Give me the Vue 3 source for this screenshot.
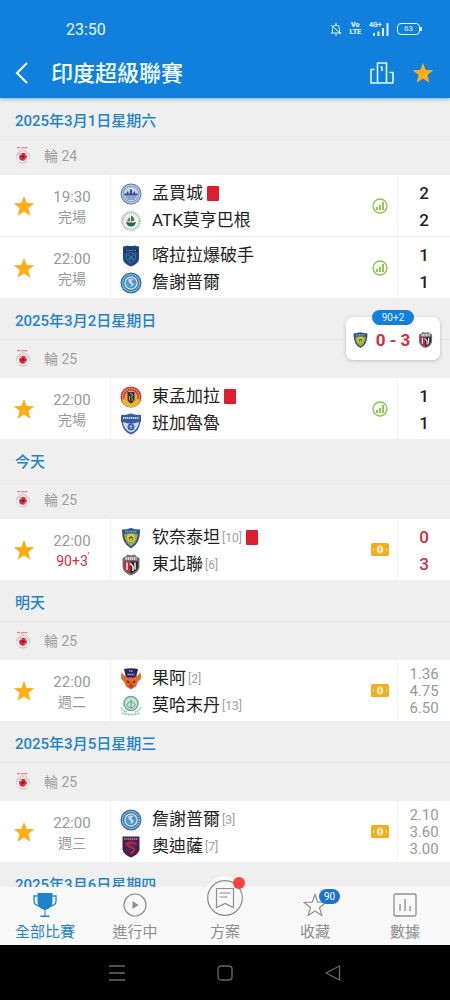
<script setup>
import { ref } from 'vue'

const activeTab = ref('all')

const groups = ref([
  {
    date: '2025年3月1日星期六', round: '輪 24', matches: [
      { id: 1, time: '19:30', status: '完場', info: 'stats', scores: ['2', '2'], fav: true,
        teams: [{ name: '孟買城', crest: 'mumbai', red: true }, { name: 'ATK莫亨巴根', crest: 'mohun' }] },
      { id: 2, time: '22:00', status: '完場', info: 'stats', scores: ['1', '1'], fav: true,
        teams: [{ name: '喀拉拉爆破手', crest: 'kerala' }, { name: '詹謝普爾', crest: 'jamshedpur' }] }
    ]
  },
  {
    date: '2025年3月2日星期日', round: '輪 25', matches: [
      { id: 3, time: '22:00', status: '完場', info: 'stats', scores: ['1', '1'], fav: true,
        teams: [{ name: '東孟加拉', crest: 'eastbengal', red: true }, { name: '班加魯魯', crest: 'bengaluru' }] }
    ]
  },
  {
    date: '今天', round: '輪 25', matches: [
      { id: 4, time: '22:00', status: '90+3', live: true, info: 'odds', scores: ['0', '3'], fav: true,
        teams: [{ name: '钦奈泰坦', crest: 'chennai', rank: 10, red: true }, { name: '東北聯', crest: 'northeast', rank: 6 }] }
    ]
  },
  {
    date: '明天', round: '輪 25', matches: [
      { id: 5, time: '22:00', status: '週二', info: 'odds', odds: ['1.36', '4.75', '6.50'], fav: true,
        teams: [{ name: '果阿', crest: 'goa', rank: 2 }, { name: '莫哈末丹', crest: 'mohammedan', rank: 13 }] }
    ]
  },
  {
    date: '2025年3月5日星期三', round: '輪 25', matches: [
      { id: 6, time: '22:00', status: '週三', info: 'odds', odds: ['2.10', '3.60', '3.00'], fav: true,
        teams: [{ name: '詹謝普爾', crest: 'jamshedpur', rank: 3 }, { name: '奧迪薩', crest: 'odisha', rank: 7 }] }
    ]
  },
  { date: '2025年3月6日星期四', matches: [] }
])

const tabs = [
  { id: 'all', label: '全部比賽' },
  { id: 'live', label: '進行中' },
  { id: 'plans', label: '方案' },
  { id: 'fav', label: '收藏' },
  { id: 'data', label: '數據' }
]
</script>

<template>
  <div class="screen">
    <svg class="defs" aria-hidden="true">
      <symbol id="star" viewBox="0 0 24 24">
        <path d="M12 1l3 7.700 8.200.4-6.400 5.200 2.200 8.200L12 18l-7 4.500 2.200-8.200L.8 9.100 9 8.700z" />
      </symbol>
      <symbol id="league" viewBox="0 0 28 32">
        <path d="M4 4q2-3 4 0M10 3h12" stroke="#dd7382" stroke-width="2" fill="none" />
        <circle cx="14" cy="18" r="12" fill="#f8f6f6" stroke="#d8d4d5" stroke-width="1.500" />
        <path d="M3 17Q14 0 25 17" fill="none" stroke="#b5acae" stroke-width="2" stroke-dasharray="2 1" />
        <circle cx="14" cy="19" r="7" fill="#dc2f3b" />
        <path d="M14 16l3 2-1 3.500h-4L11 18z" fill="#8c1c27" />
        <path d="M8 16l4-2M17 24l3-2M18 14l2 3" stroke="#fff" stroke-width="1.500" />
        <path d="M7 28q7 4 14 0" stroke="#cfc6c8" stroke-width="2" fill="none" />
      </symbol>
      <symbol id="mumbai" viewBox="0 0 44 44">
        <circle cx="22" cy="22" r="21" fill="#5f78ad" />
        <circle cx="22" cy="22" r="17.500" fill="none" stroke="#b9c7df" stroke-width="3" />
        <circle cx="22" cy="22" r="15" fill="#c3d3e8" />
        <path d="M9 21h26v4H9zM14 17h3v4h-3zM20 13h4v8h-4zM27 17h3v4h-3z" fill="#314d86" />
        <path d="M11 28h22M14 32h16" stroke="#5f78ad" stroke-width="2" />
      </symbol>
      <symbol id="mohun" viewBox="0 0 44 44">
        <circle cx="22" cy="22" r="20" fill="#f0f2ed" stroke="#dfe3dc" stroke-width="2" />
        <circle cx="22" cy="22" r="17" fill="none" stroke="#a9b6a9" stroke-width="4" stroke-dasharray="2 2" />
        <path d="M12 24q10 2 20 0-2 9-10 9t-10-9z" fill="#216c46" />
        <path d="M22 23V11q7 4 7 10z" fill="#22805b" />
        <path d="M20 23V14q-6 4-6 9z" fill="#c35245" />
      </symbol>
      <symbol id="kerala" viewBox="0 0 44 44">
        <path d="M6 3q5 0 8-2 8 2 16 0 3 2 8 2v24q0 10-16 16Q6 37 6 27z" fill="#1d467d" />
        <path d="M10 8h24v6H10z" fill="#10294f" />
        <path d="M12 11h20" stroke="#5b97c4" stroke-width="3" stroke-dasharray="2 1" />
        <path d="M13 18q9-5 18 0v9q-3 7-9 9-6-2-9-9z" fill="none" stroke="#3b73ac" stroke-width="2" />
        <path d="M17 20l4 4-3 6M27 20l-4 4 3 6" stroke="#5590c0" stroke-width="2" fill="none" />
      </symbol>
      <symbol id="jamshedpur" viewBox="0 0 44 44">
        <circle cx="22" cy="22" r="21" fill="#2f6fa9" />
        <circle cx="22" cy="22" r="17" fill="none" stroke="#9dbdd6" stroke-width="3" stroke-dasharray="3 1" />
        <circle cx="22" cy="22" r="13.500" fill="#dbe9f3" />
        <circle cx="22" cy="22" r="11" fill="#4b9bd0" />
        <path d="M16 15q8-4 11 1l-5 3q6 1 5 7-3 4-7 3l3-4q-6-2-7-10z" fill="#b5d9ed" />
        <path d="M24 16l6 4-4 2z" fill="#d14a55" />
      </symbol>
      <symbol id="eastbengal" viewBox="0 0 44 44">
        <circle cx="22" cy="22" r="21" fill="#c93832" />
        <circle cx="22" cy="22" r="17" fill="none" stroke="#efa08e" stroke-width="3" stroke-dasharray="3 2" />
        <path d="M3 27q5 15 19 16t19-16l-8-2H11z" fill="#eeb52d" />
        <circle cx="22" cy="22" r="13" fill="#e9a92f" />
        <path d="M15 12h14v16q-2 5-7 7-5-2-7-7z" fill="#273655" />
        <path d="M20 14l5 3-2 6 3 7M19 20v9" stroke="#d39343" stroke-width="2" fill="none" />
      </symbol>
      <symbol id="bengaluru" viewBox="0 0 44 44">
        <path d="M2 4q10 0 20-3 10 3 20 3v13q-2 2-2 5-2 15-18 21Q6 37 4 22q0-3-2-5z" fill="#3c5a9f" />
        <path d="M6 18q16 7 32 0-1 15-16 21Q7 33 6 18z" fill="#dce4f2" />
        <path d="M6 10h32" stroke="#c0cce5" stroke-width="4" stroke-dasharray="3 1" />
        <circle cx="22" cy="28" r="7" fill="#3c62ac" />
        <path d="M19 27h6M22 24v8M11 23l4 7M33 23l-4 7" stroke="#aebfe0" stroke-width="2" />
      </symbol>
      <symbol id="chennai" viewBox="0 0 44 44">
        <path d="M4 5q9 0 18-3 9 3 18 3 1 28-18 38Q3 33 4 5z" fill="#2c5280" />
        <path d="M8 14q14-3 28 0-2 18-14 25Q10 32 8 14z" fill="#9aaa42" />
        <path d="M10 9h24" stroke="#6aa1cc" stroke-width="4" stroke-dasharray="3 1" />
        <circle cx="22" cy="22" r="8" fill="#dfcb40" />
        <path d="M17 21l5-3 5 3-2 6h-6z" fill="#53702f" />
        <path d="M20 23h4v3h-4z" fill="#efdb55" />
      </symbol>
      <symbol id="northeast" viewBox="0 0 44 44">
        <path d="M5 8l6-3 4-4 7 2 7-2 4 4 6 3v18Q37 38 22 43 7 38 5 26z" fill="#716c6d" />
        <path d="M11 9h22" stroke="#d6d2d2" stroke-width="6" stroke-dasharray="3 1" />
        <path d="M8 15h13v24Q9 35 8 25z" fill="#c9283c" />
        <path d="M21 15h15v10q-2 10-15 14z" fill="#282729" />
        <path d="M14 17v15M20 18l6 7v9M30 17v14" stroke="#f5eeee" stroke-width="3" fill="none" />
      </symbol>
      <symbol id="goa" viewBox="0 0 44 44">
        <path d="M4 8q-6 13 4 19l4 10 10 6 10-6 4-10q10-6 4-19-2 7-8 8H12q-6-1-8-8z" fill="#e56b29" />
        <path d="M8 2q14-3 28 0l-3 13-4 4H15l-4-4z" fill="#272461" />
        <path d="M13 24l7 4-5 3zM31 24l-7 4 5 3z" fill="#5b2a38" />
        <path d="M17 37l5-8 5 8-5 3z" fill="#b44421" />
        <path d="M18 6h8M15 13h14" stroke="#a7a6d2" stroke-width="3" stroke-dasharray="3 1" />
      </symbol>
      <symbol id="mohammedan" viewBox="0 0 44 44">
        <circle cx="22" cy="17" r="14" fill="#c7e3d5" stroke="#6dab92" stroke-width="3" />
        <path d="M13 20q9-14 18 0-9 12-18 0zM22 9v17" stroke="#5ba386" stroke-width="2" fill="none" />
        <path d="M3 25q3 8 12 9M41 25q-3 8-12 9" stroke="#98c2ae" stroke-width="3" fill="none" stroke-dasharray="3 1" />
        <path d="M4 36q18 6 36 0" stroke="#9dbcb0" stroke-width="4" fill="none" stroke-dasharray="2 1" />
      </symbol>
      <symbol id="odisha" viewBox="0 0 44 44">
        <path d="M5 1h34v26q-2 10-17 16Q7 37 5 27z" fill="#46214f" />
        <path d="M8 6h28" stroke="#a68fb1" stroke-width="3" stroke-dasharray="3 1" />
        <path d="M10 14q12-7 24 0l-2 4q-8-3-12 0 10 2 11 9-2 7-7 10l-5-5q8-1 6-6-12-2-15-12z" fill="#a82848" />
        <path d="M12 24q3 8 9 11M18 18q6 1 9 6" stroke="#7d2450" stroke-width="2" fill="none" />
      </symbol>
    </svg>

    <header class="header">
      <div class="statusbar">
        <span class="clock">23:50</span>
        <div class="indicators">
          <svg width="12" height="14" viewBox="0 0 12 14" fill="none" stroke="currentColor">
            <path d="M2.500 10V6.500q0-3.500 3.500-3.500t3.500 3.500V10l1.500 1H1zM6 1v2M5 13h2M1 3l10 9" />
          </svg>
          <span class="volte"><span>Vo</span><span>LTE</span></span>
          <span class="signal">
            <span class="net">4G+</span>
            <svg width="18" height="14" viewBox="0 0 18 14" fill="currentColor">
              <path d="M2 11h2v3H2zM6.500 9.500h2V14h-2zM11 6h2v8h-2zM15.500 1h2v13h-2z" />
            </svg>
          </span>
          <span class="battery">63</span>
        </div>
      </div>
      <div class="titlebar">
        <button class="icon-btn" aria-label="返回">
          <svg width="14" height="22" viewBox="0 0 14 22" fill="none" stroke="#fff" stroke-width="2">
            <path d="M12 1L2 11l10 10" />
          </svg>
        </button>
        <h1>印度超級聯賽</h1>
        <button class="icon-btn" aria-label="排名">
          <svg width="24" height="22" viewBox="0 0 24 22" fill="none" stroke="#e2f7ff" stroke-width="1.600">
            <path d="M7.500 21V1h9v20M4.500 7.500H1V21h22V10.500h-3.500M10.500 5h1.500v4" stroke-linejoin="round" />
          </svg>
        </button>
        <button class="icon-btn" aria-label="收藏聯賽">
          <svg class="star" width="22" height="22"><use href="#star" /></svg>
        </button>
      </div>
    </header>

    <main class="list">
      <section v-for="group in groups" :key="group.date">
        <h2 class="date">{{ group.date }}</h2>
        <div v-if="group.round" class="round">
          <svg width="16" height="18"><use href="#league" /></svg>
          <span>{{ group.round }}</span>
        </div>
        <article v-for="match in group.matches" :key="match.id" class="match">
          <div class="when">
            <button class="icon-btn" aria-label="收藏比賽" :aria-pressed="match.fav" @click="match.fav = !match.fav">
              <svg class="star" :class="{ off: !match.fav }" width="22" height="22"><use href="#star" /></svg>
            </button>
            <div class="times">
              <time>{{ match.time }}</time>
              <span :class="{ live: match.live }">{{ match.status }}<sup v-if="match.live">'</sup></span>
            </div>
          </div>
          <div class="teams">
            <div v-for="team in match.teams" :key="team.name" class="team">
              <svg width="22" height="22"><use :href="'#' + team.crest" /></svg>
              <span class="name">{{ team.name }}</span>
              <span v-if="team.rank" class="rank">[{{ team.rank }}]</span>
              <i v-if="team.red" class="red-card"></i>
            </div>
          </div>
          <div class="info">
            <svg v-if="match.info === 'stats'" width="16" height="16" viewBox="0 0 16 16">
              <circle cx="8" cy="8" r="7" fill="#fbfff3" stroke="#8cc152" stroke-width="1.300" />
              <path d="M4 9h2v3H4zM7 7h2v5H7zM10 4h2v8h-2z" fill="#93c952" />
            </svg>
            <svg v-else width="18" height="13" viewBox="0 0 18 13">
              <rect width="18" height="13" rx="1.500" fill="#f2ae20" />
              <ellipse cx="9" cy="6.500" rx="3.200" ry="4" fill="#fff2c4" />
              <path d="M9 3v7M8 6.500h2" stroke="#f2ae20" fill="none" />
              <path d="M2.500 5v3M15.500 5v3" stroke="#fbe3a0" />
            </svg>
          </div>
          <div v-if="match.scores" class="scores" :class="{ live: match.live }">
            <span v-for="(score, i) in match.scores" :key="i">{{ score }}</span>
          </div>
          <div v-else class="odds">
            <span v-for="odd in match.odds" :key="odd">{{ odd }}</span>
          </div>
        </article>
      </section>
    </main>

    <aside class="float-card">
      <span class="float-time">90+2</span>
      <svg width="17" height="18"><use href="#chennai" /></svg>
      <strong>0 - 3</strong>
      <svg width="17" height="18"><use href="#northeast" /></svg>
    </aside>

    <nav class="tabs">
      <button
        v-for="tab in tabs" :key="tab.id" class="tab"
        :class="{ active: activeTab === tab.id }" @click="activeTab = tab.id"
      >
        <span class="tab-icon" :class="{ raised: tab.id === 'plans' }">
          <svg v-if="tab.id === 'all'" width="24" height="24" viewBox="0 0 24 24">
            <path d="M4.500 0h15v9q0 6-7 8v5.500h4V24h-9v-1.500h4V17q-7-2-7-8z" fill="currentColor" />
            <path d="M4.500 3H1v5q0 4 5 5M19.500 3H23v5q0 4-5 5" fill="none" stroke="currentColor" stroke-width="1.300" />
          </svg>
          <svg v-else-if="tab.id === 'live'" width="24" height="24" viewBox="0 0 24 24">
            <circle cx="12" cy="12" r="11" fill="none" stroke="currentColor" stroke-width="1.200" />
            <path d="M9.500 8l6 4-6 4z" fill="currentColor" />
          </svg>
          <svg v-else-if="tab.id === 'plans'" width="36" height="36" viewBox="0 0 36 36" fill="none" stroke="currentColor" stroke-width="1.200">
            <circle cx="18" cy="18" r="17.300" />
            <path d="M9.500 8.500h17v19L18 23.500l-8.500 4zM12.500 13h11M12.500 17h8" />
          </svg>
          <svg v-else-if="tab.id === 'fav'" width="24" height="24" viewBox="0 0 24 24" fill="none" stroke="currentColor" stroke-width="1.200">
            <path d="M12 1.500l2.800 7.700 8 .3-6.300 5 2.200 7.900L12 18l-6.700 4.400 2.200-7.900-6.300-5 8-.3z" />
          </svg>
          <svg v-else width="24" height="24" viewBox="0 0 24 24" fill="none" stroke="currentColor" stroke-width="1.300">
            <rect x="1" y="1" width="22" height="22" rx="1.500" />
            <path d="M7 11v7M12 6v12M17 13v5" />
          </svg>
          <i v-if="tab.id === 'plans'" class="dot"></i>
          <span v-if="tab.id === 'fav'" class="badge">90</span>
        </span>
        <span>{{ tab.label }}</span>
      </button>
    </nav>

    <div class="sysbar">
      <button class="icon-btn" aria-label="最近使用">
        <svg width="16" height="16" viewBox="0 0 16 16"><path d="M0 1h16M0 8h16M0 15h16" /></svg>
      </button>
      <button class="icon-btn" aria-label="主畫面">
        <svg width="16" height="16" viewBox="0 0 16 16"><rect x="1" y="1" width="14" height="14" rx="3" /></svg>
      </button>
      <button class="icon-btn" aria-label="返回">
        <svg width="16" height="16" viewBox="0 0 16 16"><path d="M14.500 1v14L1 8z" stroke-linejoin="round" /></svg>
      </button>
    </div>
  </div>
</template>

<style>
body {
  margin: 0;
  background: #000;
}
</style>

<style scoped>
.screen {
  position: relative;
  display: flex;
  flex-direction: column;
  height: 100vh;
  overflow: hidden;
  background: #efefef;
  font-family: Roboto, "Noto Sans CJK TC", sans-serif;
  color: #222;
}
.screen * {
  box-sizing: border-box;
}
.defs {
  position: absolute;
  width: 0;
  height: 0;
}
svg {
  display: block;
  flex: none;
}
button {
  border: 0;
  padding: 0;
  background: none;
  color: inherit;
  font: inherit;
  cursor: pointer;
}
.star {
  fill: #fdae17;
}
.star.off {
  fill: #ccc;
}

.header {
  flex: none;
  z-index: 2;
  background: #1080dc;
  color: #e2f7ff;
  box-shadow: 0 1px 4px #1080dc99;
}
.statusbar {
  display: flex;
  align-items: center;
  justify-content: space-between;
  height: 48px;
  padding: 10px 30px 0 66px;
}
.clock {
  font-size: 16px;
}
.indicators {
  display: flex;
  align-items: center;
  gap: 8px;
}
.volte {
  display: flex;
  flex-direction: column;
  align-items: center;
  font-size: 7px;
  line-height: 7px;
  font-weight: 900;
}
.signal {
  position: relative;
  padding-left: 2px;
}
.net {
  position: absolute;
  top: 0;
  left: 0;
  font-size: 7px;
  line-height: 7px;
  font-weight: 700;
}
.battery {
  width: 23px;
  height: 12px;
  border: 1px solid currentColor;
  border-radius: 4px;
  font-size: 8px;
  line-height: 10px;
  text-align: center;
  position: relative;
}
.battery::after {
  content: "";
  position: absolute;
  top: 3px;
  right: -3px;
  width: 2px;
  height: 4px;
  background: currentColor;
}
.titlebar {
  display: flex;
  align-items: center;
  height: 50px;
  gap: 18px;
  padding: 0 16px 0 15px;
}
h1 {
  flex: 1;
  margin: 0 0 0 4px;
  padding-top: 2px;
  font-size: 22px;
  font-weight: 500;
  line-height: 30px;
  color: #f2fdff;
}

.list {
  flex: 1;
  min-height: 0;
  overflow: hidden;
}
.date {
  display: flex;
  align-items: center;
  height: 41px;
  margin: 0;
  padding: 0 15px;
  border-bottom: 1px solid #e9e9e9;
  font-size: 15px;
  font-weight: 500;
  color: #1e82cd;
}
section:first-child .date {
  height: 39px;
  padding-top: 4px;
}
.round {
  display: flex;
  align-items: center;
  gap: 13px;
  height: 38px;
  padding: 0 15px 2px;
  font-size: 14px;
  color: #a0a0a0;
}
.match {
  display: flex;
  height: 62px;
  background: #fff;
  border-bottom: 1px solid #efefef;
}
.when {
  display: flex;
  align-items: center;
  gap: 12px;
  width: 111px;
  padding-left: 13px;
  border-right: 1px solid #f0f0f0;
}
.times {
  display: flex;
  flex-direction: column;
  align-items: center;
  width: 50px;
  padding-top: 2px;
  line-height: 20px;
  font-size: 14px;
  color: #989898;
}
.times time {
  font-size: 15px;
}
.times .live {
  position: relative;
  color: #d32c40;
}
sup {
  position: absolute;
  top: -4px;
  left: 100%;
  font-size: 10px;
}
.teams {
  flex: 1;
  min-width: 0;
  padding: 5px 0 0 9px;
}
.team {
  display: flex;
  align-items: center;
  height: 27px;
}
.name {
  margin-left: 10px;
  font-size: 17px;
  line-height: 27px;
  white-space: nowrap;
}
.rank {
  margin-left: 2px;
  font-size: 12px;
  color: #a0a0a0;
}
.red-card {
  width: 12px;
  height: 15px;
  margin-left: 4px;
  border-radius: 1px;
  background: #de1e30;
}
.info {
  display: flex;
  align-items: center;
  justify-content: center;
  width: 36px;
  border-right: 1px solid #f4f4f4;
}
.scores,
.odds {
  display: flex;
  flex-direction: column;
  align-items: center;
  width: 52px;
}
.scores {
  padding-top: 5px;
  font-size: 17px;
  font-weight: 500;
  line-height: 27px;
}
.scores.live {
  color: #d32c40;
}
.odds {
  justify-content: center;
  padding-top: 2px;
  font-size: 15px;
  line-height: 17px;
  color: #989898;
}

.float-card {
  position: absolute;
  top: 317px;
  right: 10px;
  z-index: 3;
  display: flex;
  align-items: center;
  justify-content: space-between;
  width: 94px;
  height: 43px;
  padding: 2px 6px 0;
  border-radius: 7px;
  background: #fff;
  box-shadow: 0 1px 4px #0003;
}
.float-card strong {
  font-size: 17px;
  font-weight: 700;
  color: #d32c40;
}
.float-time {
  position: absolute;
  top: -7px;
  left: 26px;
  width: 42px;
  border-radius: 8px;
  background: #1080dc;
  color: #e2f7ff;
  font-size: 10px;
  line-height: 15px;
  text-align: center;
}

.tabs {
  flex: none;
  display: flex;
  height: 58px;
  background: #f8f8f8;
  z-index: 2;
}
.tab {
  flex: 1;
  display: flex;
  flex-direction: column;
  align-items: center;
  justify-content: flex-end;
  gap: 4px;
  padding-bottom: 2px;
  font-size: 15px;
  line-height: 22px;
  color: #8e8e8e;
}
.tab.active {
  color: #1e82cd;
}
.tab-icon {
  position: relative;
}
.raised {
  margin-bottom: -3px;
  padding: 4px;
  border-radius: 50%;
  background: #f8f8f8;
}
.dot {
  position: absolute;
  top: 1px;
  right: 2px;
  width: 12px;
  height: 12px;
  border-radius: 50%;
  background: #fb4141;
}
.badge {
  position: absolute;
  top: -4px;
  left: 16px;
  width: 21px;
  border-radius: 8px;
  background: #1776cc;
  color: #fff;
  font-size: 10px;
  line-height: 15px;
  text-align: center;
}

.sysbar {
  flex: none;
  display: flex;
  align-items: center;
  justify-content: center;
  gap: 92px;
  height: 55px;
  background: #000;
}
.sysbar svg {
  fill: none;
  stroke: #6a6a6a;
  stroke-width: 1.3;
}
</style>
